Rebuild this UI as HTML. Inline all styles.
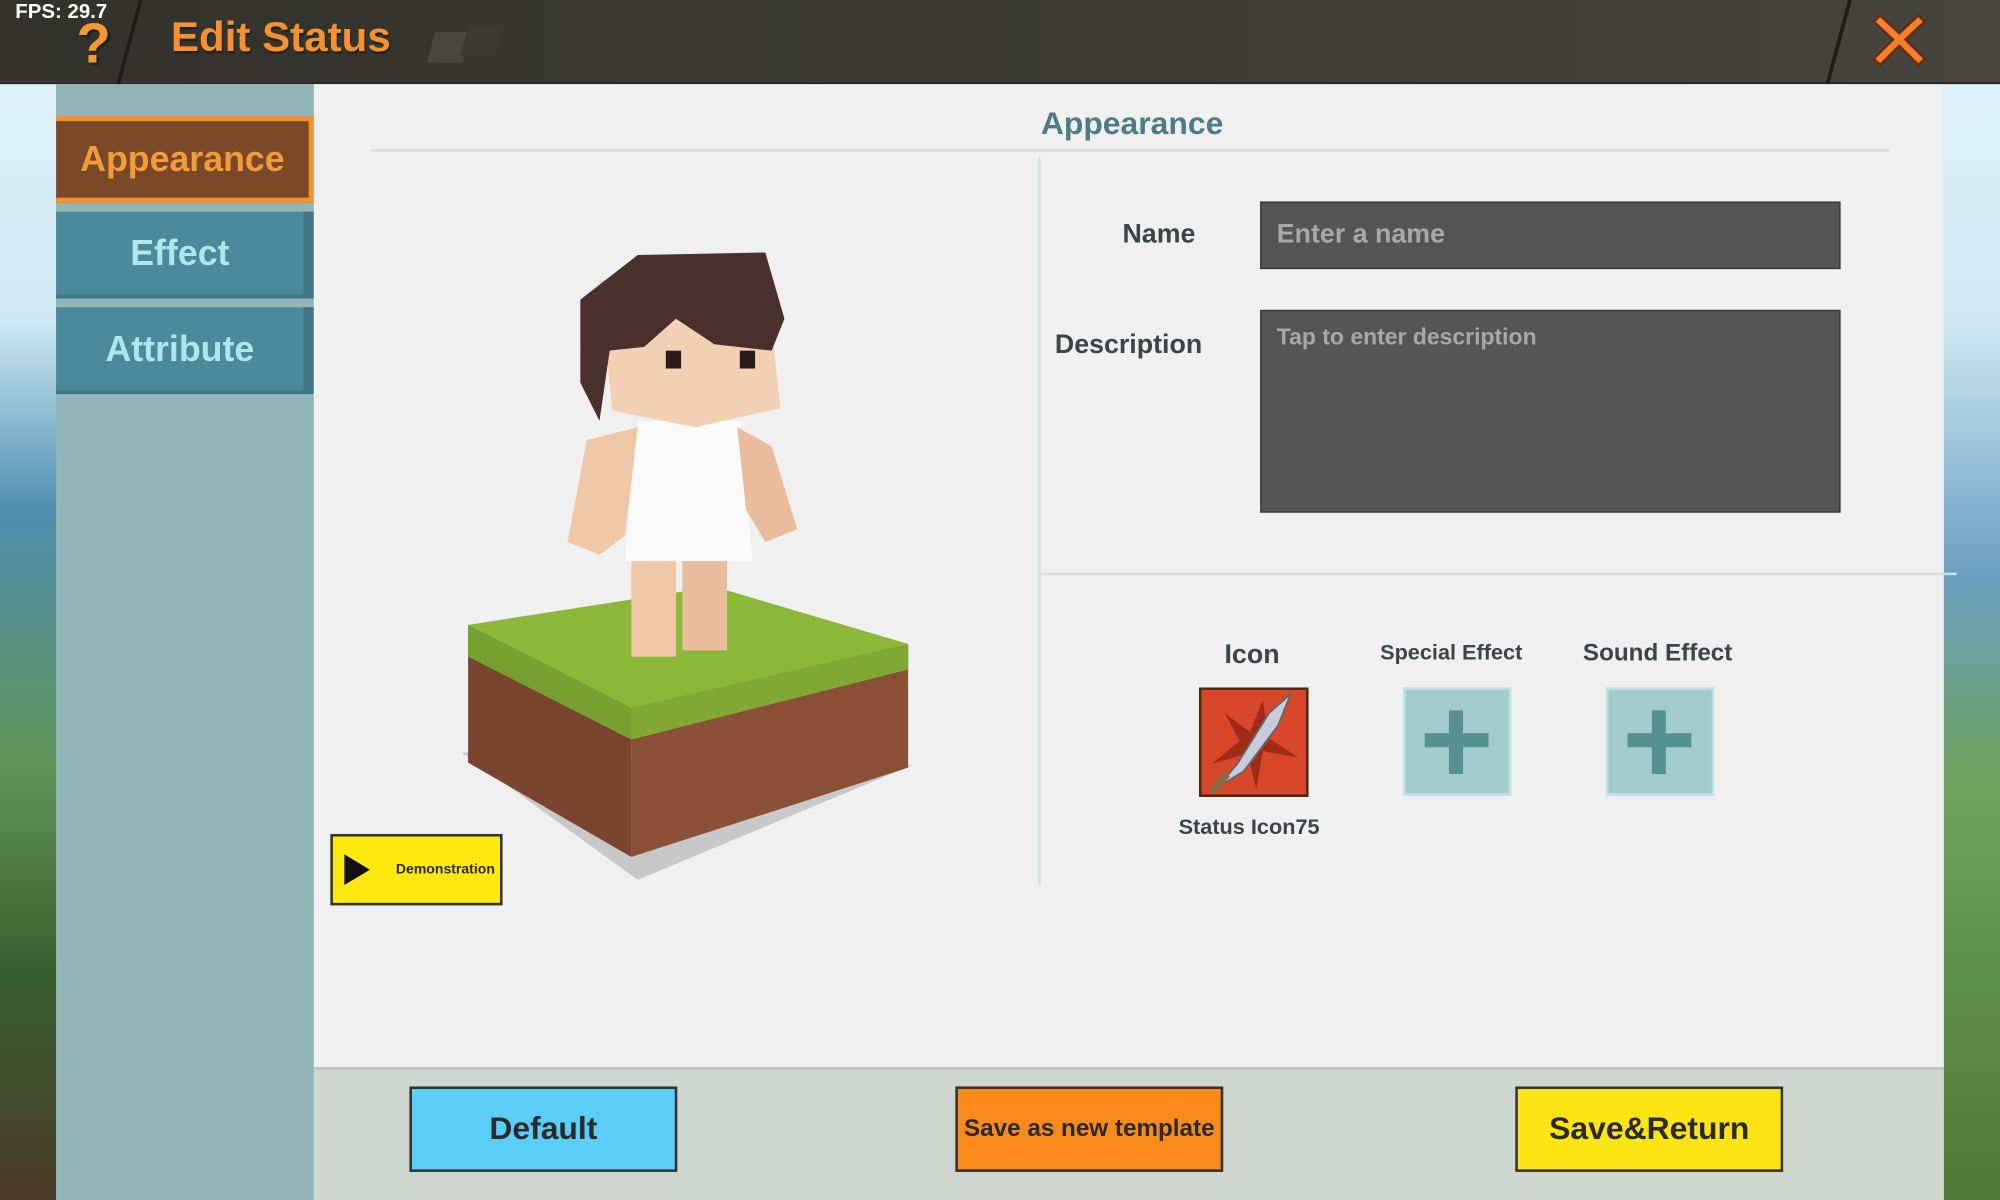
<!DOCTYPE html>
<html><head><meta charset="utf-8"><style>
*{margin:0;padding:0;box-sizing:border-box}
body{width:2000px;height:1200px;overflow:hidden;background:#7fa9c0}
#w{position:absolute;left:0;top:0;width:1568px;height:941px;transform:scale(1.27551,1.27521);transform-origin:0 0;font-family:"Liberation Sans",sans-serif;font-weight:bold;overflow:hidden}
.a{position:absolute}
.t{color:#3d4446}
.btn{position:absolute;border:2px solid #333;display:flex;align-items:center;justify-content:center;color:#2a2a2a}
</style></head><body><div id="w">
<div class="a" style="left:0;top:0;width:44px;height:941px;background:linear-gradient(#e4f5fb 0,#cfe9f3 250px,#4f8fb0 400px,#62945a 600px,#38602e 760px,#4a3a2a 941px)"></div>
<div class="a" style="left:1524px;top:0;width:44px;height:941px;background:linear-gradient(#e4f5fb 0,#cfe9f3 250px,#6aa0c0 450px,#6fa25a 620px,#4c7a36 941px)"></div>
<div class="a" style="left:0;top:0;width:1568px;height:66px;background:linear-gradient(90deg,#32312c,#3c3b35 60%,#46453d);border-bottom:2px solid #2a2a28"></div>
<div class="a" style="left:100px;top:0;width:3px;height:66px;background:#1c1c1a;transform:skewX(-15deg)"></div>
<div class="a" style="left:1440px;top:0;width:3px;height:66px;background:#1c1c1a;transform:skewX(-15deg)"></div>
<div class="a" style="left:338px;top:25px;width:28px;height:24px;background:#48473f;transform:skewX(-15deg)"></div>
<div class="a" style="left:364px;top:20px;width:28px;height:24px;background:#3a3934;transform:skewX(-15deg)"></div>
<div class="a" style="left:60px;top:10px;font-size:44px;color:#f59a30;text-shadow:2px 2px 0 #222">?</div>
<div class="a" style="left:12px;top:1px;font-size:16px;color:#fff">FPS: 29.7</div>
<div class="a" style="left:134px;top:10px;font-size:33px;color:#f5912e;text-shadow:1px 2px 0 #222">Edit Status</div>
<svg class="a" style="left:1466px;top:8px" width="46" height="46" viewBox="0 0 46 46"><path d="M8 4 L23 18 L38 4 L43 9 L28 23 L43 38 L38 43 L23 28 L8 43 L3 38 L18 23 L3 9Z" fill="#f5802a" stroke="#6a2a10" stroke-width="2"/></svg>
<div class="a" style="left:44px;top:66px;width:202px;height:875px;background:#93b7b8"></div>
<div class="a" style="left:44px;top:91px;width:202px;height:68px;background:#7a4a28;border:4px solid #f5912e;border-left:none;display:flex;align-items:center;justify-content:center;font-size:28px;color:#f59a3a">Appearance</div>
<div class="a" style="left:44px;top:166px;width:202px;height:68px;background:#4a8a9a;border-right:8px solid #3f7584;border-bottom:3px solid #3f7584;display:flex;align-items:center;justify-content:center;font-size:28px;color:#aee6ee">Effect</div>
<div class="a" style="left:44px;top:241px;width:202px;height:68px;background:#4a8a9a;border-right:8px solid #3f7584;border-bottom:3px solid #3f7584;display:flex;align-items:center;justify-content:center;font-size:28px;color:#aee6ee">Attribute</div>
<div class="a" style="left:246px;top:66px;width:1278px;height:771px;background:#f0f0f0"></div>
<div class="a" style="left:246px;top:837px;width:1278px;height:104px;background:#cfd6d0;border-top:2px solid #bcc5be"></div>
<div class="a" style="left:816px;top:83px;font-size:25px;color:#4e7c84">Appearance</div>
<div class="a" style="left:291px;top:117px;width:1190px;height:2px;background:#d5e0da"></div>
<div class="a" style="left:814px;top:124px;width:2px;height:570px;background:#d5e0da"></div>
<div class="a" style="left:816px;top:449px;width:718px;height:2px;background:#d5e0da"></div>
<div class="a t" style="left:880px;top:172px;font-size:21px">Name</div>
<div class="a t" style="left:827px;top:259px;font-size:21px">Description</div>
<div class="a" style="left:988px;top:158px;width:455px;height:53px;background:#555;border:1px solid #333;padding:13px 12px;font-size:21px;color:#a8a8a8">Enter a name</div>
<div class="a" style="left:988px;top:243px;width:455px;height:159px;background:#555;border:1px solid #333;padding:10px 12px;font-size:18px;color:#a8a8a8">Tap to enter description</div>
<div class="a t" style="left:960px;top:502px;font-size:21px">Icon</div>
<div class="a t" style="left:1082px;top:502px;font-size:17px">Special Effect</div>
<div class="a t" style="left:1241px;top:502px;font-size:19px">Sound Effect</div>
<div class="a t" style="left:924px;top:639px;font-size:17px">Status Icon75</div>
<svg class="a" style="left:940px;top:539px" width="86" height="86" viewBox="0 0 86 86"><rect x="1" y="1" width="84" height="84" fill="#d8472a" stroke="#4a2a10" stroke-width="2"/><path d="M20 20 L40 35 L50 10 L55 40 L78 55 L50 50 L45 80 L38 52 L10 60 L32 42Z" fill="#8a2010" opacity=".7"/><path d="M15 78 L30 60 L55 20 L72 5 L62 30 L35 66Z" fill="#c8ccd8" stroke="#666" stroke-width="1.5"/><path d="M10 82 L22 68" stroke="#8a6a40" stroke-width="6"/></svg>
<div class="a" style="left:1100px;top:539px;width:85px;height:85px;background:#a2cccc;border:2px solid #c2e2e2"></div>
<div class="a" style="left:1259px;top:539px;width:85px;height:85px;background:#a2cccc;border:2px solid #c2e2e2"></div>
<div class="a" style="left:1136px;top:557px;width:11px;height:50px;background:#579090"></div>
<div class="a" style="left:1117px;top:575px;width:50px;height:11px;background:#579090"></div>
<div class="a" style="left:1295px;top:557px;width:11px;height:50px;background:#579090"></div>
<div class="a" style="left:1276px;top:575px;width:50px;height:11px;background:#579090"></div>
<svg class="a" style="left:350px;top:190px" width="380" height="510" viewBox="350 190 380 510">
<polygon points="362,590 500,690 715,600" fill="#c8c8c8"/>
<polygon points="367,490 495,555 495,672 367,598" fill="#7a4530"/>
<polygon points="495,555 712,505 712,602 495,672" fill="#8a5038"/>
<polygon points="367,490 560,460 712,505 495,555" fill="#8cb83a"/>
<polygon points="367,490 495,555 495,580 367,515" fill="#78a030"/>
<polygon points="495,555 712,505 712,525 495,580" fill="#80a834"/>
<rect x="495" y="420" width="35" height="95" fill="#f0c8a8"/><rect x="535" y="420" width="35" height="90" fill="#e8bc9c"/>
<polygon points="500,330 580,330 590,440 490,440" fill="#fafafa"/>
<polygon points="460,345 500,335 490,420 470,435 445,425" fill="#f0c8a8"/>
<polygon points="578,335 605,350 625,415 600,425 585,400" fill="#e8bc9c"/>
<polygon points="470,220 600,215 612,320 545,335 480,322" fill="#f2d0b4"/>
<path d="M455 235 L500 200 L600 198 L615 250 L605 275 L560 270 L530 250 L505 272 L478 275 L470 330 L455 300Z" fill="#4a302c"/>
<rect x="522" y="275" width="12" height="14" fill="#2a1a1a"/><rect x="580" y="275" width="12" height="14" fill="#2a1a1a"/>
</svg>
<div class="btn" style="left:259px;top:654px;width:135px;height:56px;background:#fde810;justify-content:flex-end;padding-right:4px;font-size:11px">Demonstration</div>
<div class="a" style="left:270px;top:670px;width:0;height:0;border-left:20px solid #111;border-top:12px solid transparent;border-bottom:12px solid transparent"></div>
<div class="btn" style="left:321px;top:852px;width:210px;height:67px;background:#5ccdf6;font-size:25px">Default</div>
<div class="btn" style="left:749px;top:852px;width:210px;height:67px;background:#fb8a1c;font-size:19px">Save as new template</div>
<div class="btn" style="left:1188px;top:852px;width:210px;height:67px;background:#fde414;font-size:25px">Save&amp;Return</div>
</div></body></html>
